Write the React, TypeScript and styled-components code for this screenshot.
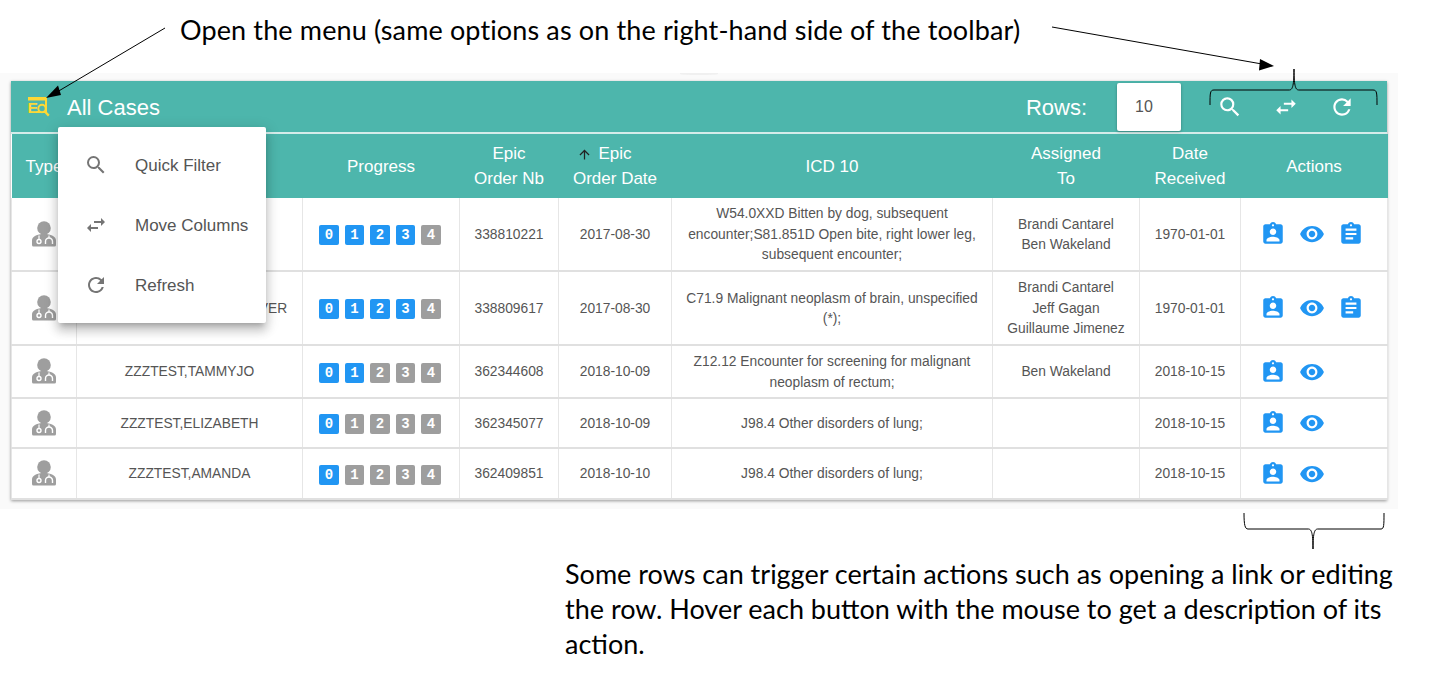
import React from "react";
import styled, { createGlobalStyle } from "styled-components";
import {
    MdArrowUpward,
    MdAssignment,
    MdAssignmentInd,
    MdRefresh,
    MdSearch,
    MdSwapHoriz,
    MdVisibility,
} from "react-icons/md";

interface CaseRow {
    name: string;
    progress: number;
    orderNb: string;
    orderDate: string;
    icd: string;
    assigned: string[];
    received: string;
    hasNotes: boolean;
    height: number;
}

const rows: CaseRow[] = [
    {
        name: "ZZZTEST,SAMANTHA",
        progress: 4,
        orderNb: "338810221",
        orderDate: "2017-08-30",
        icd: "W54.0XXD Bitten by dog, subsequent encounter;S81.851D Open bite, right lower leg, subsequent encounter;",
        assigned: ["Brandi Cantarel", "Ben Wakeland"],
        received: "1970-01-01",
        hasNotes: true,
        height: 73,
    },
    {
        name: "ZZZTEST,MARGARET-OLIVER",
        progress: 4,
        orderNb: "338809617",
        orderDate: "2017-08-30",
        icd: "C71.9 Malignant neoplasm of brain, unspecified (*);",
        assigned: ["Brandi Cantarel", "Jeff Gagan", "Guillaume Jimenez"],
        received: "1970-01-01",
        hasNotes: true,
        height: 74,
    },
    {
        name: "ZZZTEST,TAMMYJO",
        progress: 2,
        orderNb: "362344608",
        orderDate: "2018-10-09",
        icd: "Z12.12 Encounter for screening for malignant neoplasm of rectum;",
        assigned: ["Ben Wakeland"],
        received: "2018-10-15",
        hasNotes: false,
        height: 53,
    },
    {
        name: "ZZZTEST,ELIZABETH",
        progress: 1,
        orderNb: "362345077",
        orderDate: "2018-10-09",
        icd: "J98.4 Other disorders of lung;",
        assigned: [],
        received: "2018-10-15",
        hasNotes: false,
        height: 50,
    },
    {
        name: "ZZZTEST,AMANDA",
        progress: 1,
        orderNb: "362409851",
        orderDate: "2018-10-10",
        icd: "J98.4 Other disorders of lung;",
        assigned: [],
        received: "2018-10-15",
        hasNotes: false,
        height: 51,
    },
];

const columnWidths = [65, 226, 157, 99, 113, 321, 147, 101, 147];

const DoctorIcon = () => (
    <svg width="26" height="27" viewBox="0 0 26 27">
        <circle cx="13" cy="7" r="6.8" fill="#9e9e9e" />
        <path d="M1 24v-4.500c0-4 5-6.500 12-6.500s12 2.500 12 6.500V24a1.500 1.500 0 0 1-1.500 1.500h-21A1.500 1.500 0 0 1 1 24z" fill="#9e9e9e" />
        <circle cx="8" cy="20.500" r="2" stroke="#fff" strokeWidth="1.4" fill="none" />
        <path d="M8 14.500v4" stroke="#fff" strokeWidth="1.2" />
        <path d="M14.500 23v-2.500a3.500 3.500 0 0 1 7 0V23" stroke="#fff" strokeWidth="1.4" fill="none" />
        <path d="M18 14.500v2.500" stroke="#fff" strokeWidth="1.2" />
    </svg>
);

const LogoIcon = () => (
    <svg width="22" height="21" viewBox="0 0 22 21">
        <path d="M0 1h19v16H9v-2h8V4.500H0z" fill="#fdd835" />
        <text x="-0.500" y="17" fontFamily="Liberation Sans, sans-serif" fontWeight="700" fontSize="15.500" fill="#fdd835">
            E
        </text>
        <circle cx="14" cy="12.500" r="3.700" fill="#4db6ac" stroke="#fdd835" strokeWidth="2" />
        <path d="M16.600 15.300l4.200 4.300" stroke="#fdd835" strokeWidth="2.300" />
    </svg>
);

const Annotations = () => (
    <Overlay viewBox="0 0 1437 679">
        <path d="M165 28L57 92" stroke="#000" strokeWidth="1" />
        <path d="M46 98L58 85.500L61 95z" fill="#000" />
        <path d="M1052 27L1262 64" stroke="#000" strokeWidth="1" />
        <path d="M1274 66L1260 59L1259 70.500z" fill="#000" />
        <path
            d="M1210 105C1210 93 1210 90 1214 90H1289C1292 90 1294 88 1294 69C1294 88 1296 90 1299 90H1373C1377 90 1377 93 1377 105"
            fill="none"
            stroke="#000"
            strokeWidth="1"
        />
        <path
            d="M1244 513C1244 525 1245 529 1248 529H1308C1311 529 1313 531 1313 549C1313 531 1315 529 1318 529H1381C1384 529 1384 525 1384 513"
            fill="none"
            stroke="#000"
            strokeWidth="1"
        />
    </Overlay>
);

export default function App() {
    return (
        <Page>
            <GlobalStyle />
            <TopNote>Open the menu (same options as on the right-hand side of the toolbar)</TopNote>
            <Shot>
                <TabEdge />
                <Card>
                    <Toolbar>
                        <LogoIcon />
                        <Title>All Cases</Title>
                        <RowsLabel>Rows:</RowsLabel>
                        <RowsInput>10</RowsInput>
                        <ToolIcons>
                            <MdSearch size={26} />
                            <MdSwapHoriz size={26} />
                            <MdRefresh size={26} />
                        </ToolIcons>
                    </Toolbar>
                    <Table>
                        <colgroup>
                            {columnWidths.map((w, i) => (
                                <col key={i} width={w} />
                            ))}
                        </colgroup>
                        <thead>
                            <tr>
                                <Th>Type</Th>
                                <Th>Patient Name</Th>
                                <Th>Progress</Th>
                                <Th>
                                    Epic
                                    <br />
                                    Order Nb
                                </Th>
                                <Th>
                                    <Sorted>
                                        <SortArrow>
                                            <MdArrowUpward size={15} />
                                        </SortArrow>
                                        Epic
                                    </Sorted>
                                    <br />
                                    Order Date
                                </Th>
                                <Th>ICD 10</Th>
                                <Th>
                                    Assigned
                                    <br />
                                    To
                                </Th>
                                <Th>
                                    Date
                                    <br />
                                    Received
                                </Th>
                                <Th>Actions</Th>
                            </tr>
                        </thead>
                        <tbody>
                            {rows.map((row) => (
                                <Tr key={row.orderNb} $height={row.height}>
                                    <Td>
                                        <IconCell>
                                            <DoctorIcon />
                                        </IconCell>
                                    </Td>
                                    <Td>{row.name}</Td>
                                    <Td>
                                        <Steps>
                                            {[0, 1, 2, 3, 4].map((step) => (
                                                <Step key={step} $done={step < row.progress}>
                                                    {step}
                                                </Step>
                                            ))}
                                        </Steps>
                                    </Td>
                                    <Td>{row.orderNb}</Td>
                                    <Td>{row.orderDate}</Td>
                                    <IcdCell>{row.icd}</IcdCell>
                                    <Td>
                                        {row.assigned.map((person) => (
                                            <div key={person}>{person}</div>
                                        ))}
                                    </Td>
                                    <Td>{row.received}</Td>
                                    <Td>
                                        <Actions>
                                            <MdAssignmentInd size={26} />
                                            <MdVisibility size={26} />
                                            {row.hasNotes && <MdAssignment size={26} />}
                                        </Actions>
                                    </Td>
                                </Tr>
                            ))}
                        </tbody>
                    </Table>
                    <Menu>
                        <MenuItem>
                            <MdSearch size={24} />
                            <MenuLabel>Quick Filter</MenuLabel>
                        </MenuItem>
                        <MenuItem>
                            <MdSwapHoriz size={24} />
                            <MenuLabel>Move Columns</MenuLabel>
                        </MenuItem>
                        <MenuItem>
                            <MdRefresh size={24} />
                            <MenuLabel>Refresh</MenuLabel>
                        </MenuItem>
                    </Menu>
                </Card>
            </Shot>
            <BottomNote>
                Some rows can trigger certain actions such as opening a link or editing the row. Hover each button
                with the mouse to get a description of its action.
            </BottomNote>
            <Annotations />
        </Page>
    );
}

const GlobalStyle = createGlobalStyle`
    html, body {
        margin: 0;
        background: #fff;
    }
    * {
        box-sizing: border-box;
    }
`;
const Page = styled.div`
    position: relative;
    width: 1437px;
    height: 679px;
    overflow: hidden;
    font-family: "Liberation Sans", Arial, sans-serif;
`;
const Overlay = styled.svg`
    position: absolute;
    top: 0;
    left: 0;
    width: 1437px;
    height: 679px;
    pointer-events: none;
`;
const TopNote = styled.p`
    margin: 0;
    height: 73px;
    padding: 12px 0 0 180px;
    font-family: Lato, sans-serif;
    font-size: 27px;
    letter-spacing: 0.13px;
    line-height: 35px;
    color: #000;
    white-space: nowrap;
`;
const Shot = styled.div`
    position: relative;
    width: 1398px;
    padding: 8px 11px 9px;
    background: #fafafa;
`;
const TabEdge = styled.div`
    position: absolute;
    top: 0;
    left: 680px;
    width: 38px;
    height: 2px;
    background: #f0f0f0;
    border-radius: 0 0 50% 50%;
`;
const Card = styled.div`
    position: relative;
    width: 1376px;
    background: #fff;
    box-shadow: 0 1px 3px rgba(0, 0, 0, 0.4);
`;
const Toolbar = styled.div`
    display: flex;
    align-items: center;
    height: 53px;
    padding-left: 17px;
    background: #4db6ac;
    border-bottom: 2px solid #d5ecea;
    color: #fff;
`;
const Title = styled.span`
    margin: 2px 0 0 17px;
    font-size: 22px;
`;
const RowsLabel = styled.span`
    margin: 2px 0 0 auto;
    font-size: 22px;
`;
const RowsInput = styled.div`
    width: 64px;
    height: 48px;
    margin: 0 0 0 30px;
    padding-left: 18px;
    background: #fff;
    border-radius: 2px;
    box-shadow: 0 1px 3px rgba(0, 0, 0, 0.3);
    color: #555;
    font-size: 16px;
    line-height: 47px;
`;
const ToolIcons = styled.div`
    display: flex;
    gap: 30px;
    margin: 0 32px 0 36px;
`;
const Table = styled.table`
    width: 1376px;
    table-layout: fixed;
    border-collapse: collapse;
`;
const Th = styled.th`
    height: 64px;
    padding: 0;
    background: #4db6ac;
    color: #fff;
    font-size: 17px;
    font-weight: 400;
    line-height: 25px;
    text-align: center;
    white-space: nowrap;
`;
const Sorted = styled.span`
    position: relative;
`;
const SortArrow = styled.span`
    position: absolute;
    left: -21px;
    top: 0;
    color: #222;
`;
const Tr = styled.tr<{ $height: number }>`
    height: ${(p) => p.$height}px;
    border-bottom: 2px solid #e0e0e0;
`;
const Td = styled.td`
    padding: 2px 0 0;
    border-left: 1.5px solid #e6e6e6;
    border-right: 1.5px solid #e6e6e6;
    color: #555;
    font-size: 13.800px;
    line-height: 20.500px;
    text-align: center;
    vertical-align: middle;
`;
const IcdCell = styled(Td)`
    padding: 2px 14px 0;
`;
const IconCell = styled.div`
    display: flex;
    justify-content: center;
    margin-top: -2px;
`;
const Steps = styled.div`
    display: flex;
    justify-content: center;
    gap: 6px;
    padding-right: 2px;
`;
const Step = styled.span<{ $done: boolean }>`
    width: 19.500px;
    height: 20px;
    border-radius: 2px;
    background: ${(p) => (p.$done ? "#2196f3" : "#9e9e9e")};
    color: #fff;
    font-family: "Liberation Mono", monospace;
    font-size: 14px;
    font-weight: 700;
    line-height: 20px;
    text-align: center;
`;
const Actions = styled.div`
    display: flex;
    gap: 13px;
    margin-top: -2px;
    padding-left: 19px;
    color: #2196f3;
`;
const Menu = styled.div`
    position: absolute;
    top: 46px;
    left: 47px;
    width: 208px;
    padding: 8px 0;
    background: #fff;
    border-radius: 2px;
    box-shadow: 0 5px 5px -3px rgba(0, 0, 0, 0.2), 0 8px 10px 1px rgba(0, 0, 0, 0.14),
        0 3px 14px 2px rgba(0, 0, 0, 0.12);
`;
const MenuItem = styled.div`
    display: flex;
    align-items: center;
    gap: 27px;
    height: 60px;
    padding-left: 26px;
    color: #757575;
`;
const MenuLabel = styled.span`
    margin-top: 2px;
    color: #555;
    font-size: 17px;
`;
const BottomNote = styled.p`
    width: 850px;
    margin: 47px 0 0 565px;
    font-family: Lato, sans-serif;
    font-size: 27px;
    line-height: 35px;
    color: #000;
`;
